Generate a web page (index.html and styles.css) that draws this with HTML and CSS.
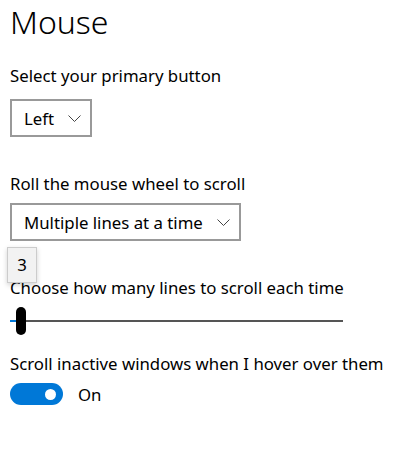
FILE: index.html
```html
<!DOCTYPE html>
<html lang="en">
<head>
    <meta charset="UTF-8">
    <title>Mouse</title>
    <link rel="stylesheet" href="styles.css">
</head>
<body>
    <main class="page">
        <h1 class="title">Mouse</h1>

        <section class="setting primary">
            <label class="label">Select your primary button</label>
            <div class="combo">
                <span>Left</span>
                <svg class="chevron" viewBox="0 0 13 7" width="13" height="7"><path d="M0.5 0.5 L6.5 6.5 L12.5 0.5" fill="none" stroke="#444" stroke-width="1"/></svg>
            </div>
        </section>

        <section class="setting wheel">
            <label class="label">Roll the mouse wheel to scroll</label>
            <div class="combo">
                <span>Multiple lines at a time</span>
                <svg class="chevron" viewBox="0 0 13 7" width="13" height="7"><path d="M0.5 0.5 L6.5 6.5 L12.5 0.5" fill="none" stroke="#444" stroke-width="1"/></svg>
            </div>
        </section>

        <section class="setting lines">
            <label class="label">Choose how many lines to scroll each time</label>
            <div class="tooltip">3</div>
            <div class="slider">
                <div class="track-fill"></div>
                <div class="thumb"></div>
                <div class="track"></div>
            </div>
        </section>

        <section class="setting inactive">
            <label class="label">Scroll inactive windows when I hover over them</label>
            <div class="toggle-row">
                <div class="toggle"><div class="knob"></div></div>
                <span>On</span>
            </div>
        </section>
    </main>
</body>
</html>
```

FILE: styles.css
```css
body {
    margin: 0;
    background: #fff;
    color: #000;
    font-family: "Noto Sans", "Open Sans", sans-serif;
}

.page {
    padding: 0 10px;
}

.title {
    margin: 0;
    font-weight: 300;
    font-size: 32px;
    line-height: 44px;
}

.setting {
    display: flex;
    flex-direction: column;
    align-items: flex-start;
}

.label {
    font-size: 16.8px;
    line-height: 22px;
}

/* spacing between the groups */
.primary {
    margin-top: 21px;
}

.primary .label {
    margin-bottom: 12px;
}

.wheel {
    margin-top: 36px;
}

.wheel .label {
    margin-bottom: 8px;
}

.lines {
    position: relative;
    margin-top: 36px;
}

.inactive {
    margin-top: 18px;
}

/* dropdowns */
.combo {
    display: flex;
    align-items: center;
    gap: 14px;
    height: 38px;
    box-sizing: border-box;
    padding: 0 9px 0 12px;
    border: 2px solid #999;
    font-size: 16.8px;
}

.chevron {
    display: block;
    margin-top: 1px;
}

/* value tooltip over the slider */
.tooltip {
    position: absolute;
    left: -3px;
    top: -30px;
    width: 30px;
    height: 36px;
    box-sizing: border-box;
    background: #f2f2f2;
    border: 1px solid #ccc;
    box-shadow: 0 2px 5px rgba(0, 0, 0, 0.18);
    font-size: 16.8px;
    line-height: 34px;
    text-align: center;
}

.slider {
    display: flex;
    align-items: center;
    width: 333px;
    height: 28px;
    margin-top: 8px;
}

.track-fill {
    width: 6px;
    height: 2px;
    background: #0078d7;
}

.thumb {
    width: 10px;
    height: 28px;
    border-radius: 5px;
    background: #000;
}

.track {
    flex: 1;
    height: 2px;
    background: #555;
}

/* on/off switch */
.toggle-row {
    display: flex;
    align-items: center;
    gap: 15px;
    margin-top: 7px;
    font-size: 16.8px;
    line-height: 22px;
}

.toggle-row span {
    margin-top: 2px;
}

.toggle {
    display: flex;
    align-items: center;
    justify-content: flex-end;
    width: 53px;
    height: 22px;
    box-sizing: border-box;
    padding-right: 7px;
    border-radius: 11px;
    background: #0078d7;
}

.knob {
    width: 11px;
    height: 11px;
    border-radius: 50%;
    background: #fff;
}
```
